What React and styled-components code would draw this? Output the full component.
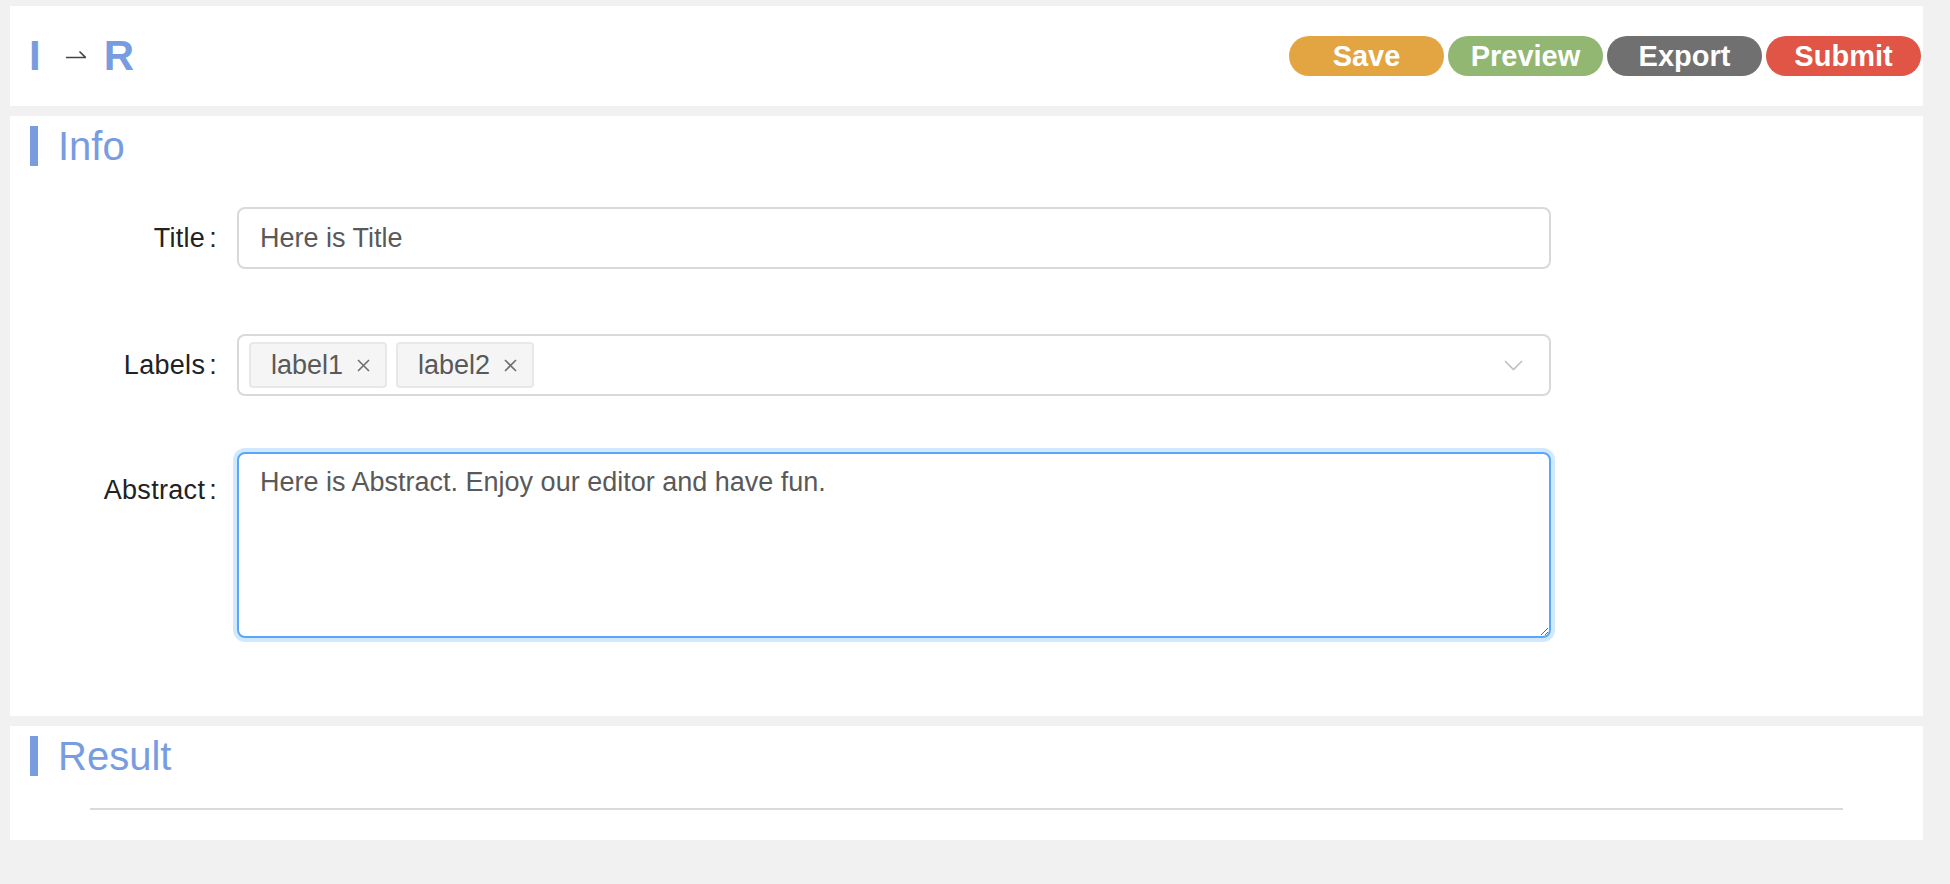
import { styled, createGlobalStyle } from "styled-components";

const GlobalStyle = createGlobalStyle`
  html, body {
    margin: 0;
    padding: 0;
    background: #f1f1f1;
    font-family: "Liberation Sans", Arial, sans-serif;
  }
`;

const Page = styled.div`
  min-height: 884px;
  padding: 6px 27px 0 10px;
  background: #f1f1f1;
  box-sizing: border-box;
`;
const Header = styled.div`
  display: flex;
  justify-content: space-between;
  align-items: center;
  height: 100px;
  padding: 0 2px 0 19px;
  background: #fff;
`;
const Logo = styled.div`
  display: flex;
  align-items: center;
  color: #779de0;
  font-size: 42px;
  font-weight: 700;
  line-height: 1;
`;
const Arrow = styled.svg`
  width: 20px;
  height: 10px;
  margin: 0 18px 0 25px;
  position: relative;
  top: -2px;
`;
const Buttons = styled.div`
  display: flex;
  gap: 4px;
`;
const ActionButton = styled.div`
  width: 155px;
  height: 40px;
  border-radius: 20px;
  background: ${(props) => props.color};
  color: #fff;
  font-size: 29px;
  font-weight: 700;
  line-height: 40px;
  text-align: center;
`;
const Panel = styled.div`
  margin-top: 10px;
  height: ${(props) => props.height}px;
  background: #fff;
  box-sizing: border-box;
  padding-top: 10px;
`;
const SectionTitle = styled.div`
  display: flex;
  align-items: center;
  height: 40px;
  padding-left: 20px;
`;
const TitleBar = styled.div`
  width: 8px;
  height: 40px;
  background: #779ce0;
`;
const TitleText = styled.div`
  margin-left: 20px;
  color: #779de0;
  font-size: 40px;
  line-height: 40px;
`;
const Form = styled.div`
  margin-top: 41px;
`;
const FormRow = styled.div`
  display: flex;
  align-items: ${(props) => (props.top ? "flex-start" : "center")};
  margin-bottom: ${(props) => props.gap || 0}px;
`;
const Label = styled.div`
  width: 207px;
  padding-right: 20px;
  padding-top: ${(props) => props.offset || 0}px;
  text-align: right;
  font-size: 27px;
  letter-spacing: 0.3px;
  color: #222;
`;
const Colon = styled.span`
  margin-left: 4px;
`;
const TextInput = styled.div`
  width: 1314px;
  height: 62px;
  box-sizing: border-box;
  border: 2px solid #d9d9d9;
  border-radius: 8px;
  padding: 0 22px 0 21px;
  display: flex;
  align-items: center;
  font-size: 27px;
  color: #595959;
`;
const SelectBox = styled(TextInput)`
  padding: 0 22px 0 10px;
  gap: 9px;
`;
const Tag = styled.div`
  display: flex;
  align-items: center;
  height: 46px;
  box-sizing: border-box;
  padding: 0 15px 0 20px;
  background: #f5f5f5;
  border: 2px solid #e8e8e8;
  border-radius: 4px;
  font-size: 27px;
  color: #595959;
`;
const Close = styled.svg`
  width: 13px;
  height: 13px;
  margin-left: 14px;
`;
const Chevron = styled.svg`
  width: 19px;
  height: 11px;
  margin-left: auto;
  margin-right: 4px;
`;
const Area = styled.textarea`
  width: 1314px;
  height: 186px;
  box-sizing: border-box;
  border: 2px solid #5aa6fb;
  border-radius: 8px;
  box-shadow: 0 0 0 4px rgba(24, 144, 255, 0.2);
  padding: 7px 22px 7px 21px;
  font-family: "Liberation Sans", Arial, sans-serif;
  font-size: 27px;
  line-height: 42px;
  color: #595959;
  outline: none;
  resize: vertical;
  margin: 0;
`;
const Divider = styled.div`
  margin: 32px 80px 0;
  height: 2px;
  background: #dadada;
`;

const buttons = [
  { text: "Save", color: "#e2a542" },
  { text: "Preview", color: "#91b772" },
  { text: "Export", color: "#707070" },
  { text: "Submit", color: "#e05545" },
];

function Section({ title }) {
  return (
    <SectionTitle>
      <TitleBar />
      <TitleText>{title}</TitleText>
    </SectionTitle>
  );
}

function LabelTag({ text }) {
  return (
    <Tag>
      {text}
      <Close viewBox="0 0 13 13">
        <path d="M1 1 L12 12 M12 1 L1 12" stroke="#6f6f6f" strokeWidth="1.6" fill="none" />
      </Close>
    </Tag>
  );
}

export default function App() {
  return (
    <Page>
      <GlobalStyle />
      <Header>
        <Logo>
          <span>I</span>
          <Arrow viewBox="0 0 20 10">
            <path d="M0 8.5 H19.5 L13.5 2.5" stroke="#454545" strokeWidth="1.6" fill="none" />
          </Arrow>
          <span>R</span>
        </Logo>
        <Buttons>
          {buttons.map((b) => (
            <ActionButton key={b.text} color={b.color}>
              {b.text}
            </ActionButton>
          ))}
        </Buttons>
      </Header>
      <Panel height={600}>
        <Section title="Info" />
        <Form>
          <FormRow gap={65}>
            <Label>
              Title<Colon>:</Colon>
            </Label>
            <TextInput>Here is Title</TextInput>
          </FormRow>
          <FormRow gap={56}>
            <Label>
              Labels<Colon>:</Colon>
            </Label>
            <SelectBox>
              <LabelTag text="label1" />
              <LabelTag text="label2" />
              <Chevron viewBox="0 0 19 11">
                <path d="M1 1 L9.5 9.5 L18 1" stroke="#bfbfbf" strokeWidth="1.6" fill="none" />
              </Chevron>
            </SelectBox>
          </FormRow>
          <FormRow top>
            <Label offset={23}>
              Abstract<Colon>:</Colon>
            </Label>
            <Area readOnly value="Here is Abstract. Enjoy our editor and have fun." />
          </FormRow>
        </Form>
      </Panel>
      <Panel height={114}>
        <Section title="Result" />
        <Divider />
      </Panel>
    </Page>
  );
}
